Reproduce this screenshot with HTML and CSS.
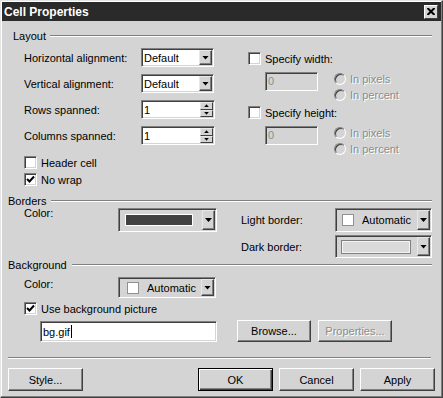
FILE: index.html
```html
<!DOCTYPE html>
<html lang="en">
<head>
  <meta charset="UTF-8">
  <meta name="viewport" content="width=device-width, initial-scale=1.0">
  <link rel="stylesheet" href="styles.css">
  <title>Cell Properties</title>
</head>
<body>
  <div class="window">
    <div class="titlebar">
      <span class="title">Cell Properties</span>
      <span class="close">
        <svg width="8" height="7" viewBox="0 0 8 7"><path d="M0.5 0 L7.5 7 M7.5 0 L0.5 7" stroke="#000" stroke-width="2"/></svg>
      </span>
    </div>

    <div class="content">
      <!-- Layout -->
      <div class="group-head layout-head"><span>Layout</span><i class="rule"></i></div>
      <div class="layout-grid">
        <div class="left-col">
          <div class="row">
            <span class="lbl">Horizontal alignment:</span>
            <div class="select field"><span class="val">Default</span><b class="drop"></b></div>
          </div>
          <div class="row">
            <span class="lbl">Vertical alignment:</span>
            <div class="select field"><span class="val">Default</span><b class="drop"></b></div>
          </div>
          <div class="row">
            <span class="lbl">Rows spanned:</span>
            <div class="spin field"><span class="val">1</span><span class="updown"><b class="up"></b><b class="down"></b></span></div>
          </div>
          <div class="row">
            <span class="lbl">Columns spanned:</span>
            <div class="spin field"><span class="val">1</span><span class="updown"><b class="up"></b><b class="down"></b></span></div>
          </div>
          <div class="check-row first"><span class="check"></span>Header cell</div>
          <div class="check-row">
            <span class="check"><svg width="9" height="9" viewBox="0 0 9 9"><path d="M1 4 L3.5 6.5 L8 1.5" stroke="#000" stroke-width="2" fill="none"/></svg></span>No wrap
          </div>
        </div>

        <div class="right-col">
          <div class="size-block">
            <div class="check-row"><span class="check"></span>Specify width:</div>
            <div class="size-opts">
              <div class="num field off">0</div>
              <div class="radios">
                <div class="radio-row"><span class="radio"></span><span class="dim">In pixels</span></div>
                <div class="radio-row"><span class="radio"></span><span class="dim">In percent</span></div>
              </div>
            </div>
          </div>
          <div class="size-block">
            <div class="check-row"><span class="check"></span>Specify height:</div>
            <div class="size-opts">
              <div class="num field off">0</div>
              <div class="radios">
                <div class="radio-row"><span class="radio"></span><span class="dim">In pixels</span></div>
                <div class="radio-row"><span class="radio"></span><span class="dim">In percent</span></div>
              </div>
            </div>
          </div>
        </div>
      </div>

      <!-- Borders -->
      <div class="group-head borders-head"><span>Borders</span><i class="rule"></i></div>
      <div class="borders-grid">
        <span class="lbl top">Color:</span>
        <div class="color-drop field">
          <span class="bar dark"></span><b class="drop"></b>
        </div>
        <span></span>
        <span class="lbl">Light border:</span>
        <div class="color-drop field">
          <span class="sq"></span><span class="auto">Automatic</span><b class="drop"></b>
        </div>
        <span></span><span></span><span></span>
        <span class="lbl">Dark border:</span>
        <div class="color-drop field">
          <span class="bar light"></span><b class="drop"></b>
        </div>
      </div>

      <!-- Background -->
      <div class="group-head bg-head"><span>Background</span><i class="rule"></i></div>
      <div class="bg-color-row">
        <span class="lbl top">Color:</span>
        <div class="color-drop field narrow">
          <span class="sq"></span><span class="auto">Automatic</span><b class="drop"></b>
        </div>
      </div>
      <div class="check-row bg-check">
        <span class="check"><svg width="9" height="9" viewBox="0 0 9 9"><path d="M1 4 L3.5 6.5 L8 1.5" stroke="#000" stroke-width="2" fill="none"/></svg></span>Use background picture
      </div>
      <div class="file-row">
        <div class="file field">bg.gif<i class="caret"></i></div>
        <button class="btn browse">Browse...</button>
        <button class="btn props" disabled>Properties...</button>
      </div>

      <div class="separator"></div>

      <div class="button-row">
        <button class="btn">Style...</button>
        <button class="btn default ok">OK</button>
        <button class="btn">Cancel</button>
        <button class="btn">Apply</button>
      </div>
    </div>
  </div>
</body>
</html>
```

FILE: styles.css
```css
body {
  margin: 0;
  font-family: 'Liberation Sans', Arial, sans-serif;
  font-size: 11px;
  color: #000;
  background-color: #d4d4d4;
}
.window {
  width: 443px;
  height: 398px;
  box-sizing: border-box;
  background-color: #d4d4d4;
  border: 1px solid;
  border-color: #e4e4e4 #404040 #404040 #e4e4e4;
  padding: 1px;
  box-shadow: inset -1px -1px #808080, inset 1px 1px #fff;
}
.titlebar {
  height: 19px;
  background-color: #2a2a2a;
  display: flex;
  align-items: center;
  justify-content: space-between;
  padding: 0 3px 0 2px;
}
.title {
  color: #fff;
  font-weight: bold;
  font-size: 12px;
}
.close {
  width: 14px;
  height: 14px;
  box-sizing: border-box;
  background-color: #d4d4d4;
  border: 1px solid;
  border-color: #fff #404040 #404040 #fff;
  display: flex;
  align-items: center;
  justify-content: center;
}
.content {
  padding: 8px 9px 0 6px;
}

/* group headers */
.group-head {
  height: 14px;
  display: flex;
  align-items: center;
  gap: 4px;
}
.rule {
  flex: 1;
  height: 0;
  border-top: 1px solid #808080;
  border-bottom: 1px solid #fff;
}
.layout-head {
  margin-left: 5px;
}
.borders-head {
  margin-top: 8px;
}
.bg-head .rule {
  margin-left: 1px;
}

/* shared fields */
.field {
  box-sizing: border-box;
  border: 1px solid;
  border-color: #808080 #fff #fff #808080;
  box-shadow: inset 1px 1px #404040, inset -1px -1px #d4d4d4;
}
.drop {
  width: 13px;
  box-sizing: border-box;
  align-self: stretch;
  margin: 1px 1px 1px auto;
  background-color: #d4d4d4;
  border: 1px solid;
  border-color: #e8e8e8 #404040 #404040 #e8e8e8;
  box-shadow: inset -1px -1px #808080;
  display: flex;
  align-items: center;
  justify-content: center;
}
.drop::after {
  content: "";
  width: 7px;
  height: 4px;
  background-color: #000;
  clip-path: polygon(0 0, 100% 0, 50% 100%);
}
.lbl.top {
  align-self: start;
}

/* layout section */
.layout-grid {
  display: flex;
  padding-left: 16px;
}
.left-col {
  width: 224px;
  padding-top: 5px;
}
.row {
  display: flex;
  align-items: center;
  height: 19px;
}
.row + .row {
  margin-top: 7px;
}
.row .lbl {
  width: 117px;
}
.select {
  width: 73px;
  height: 19px;
  display: flex;
  align-items: center;
  background-color: #fff;
}
.val {
  padding-left: 2px;
}
.spin {
  width: 74px;
  height: 19px;
  display: flex;
  align-items: center;
  background-color: #fff;
}
.updown {
  margin-left: auto;
  align-self: stretch;
  width: 13px;
  display: flex;
  flex-direction: column;
  margin-right: 1px;
  margin-top: 1px;
  margin-bottom: 1px;
}
.updown b {
  flex: 1;
  background-color: #d4d4d4;
  border: 1px solid;
  border-color: #e8e8e8 #404040 #404040 #e8e8e8;
  display: flex;
  align-items: center;
  justify-content: center;
}
.updown b::after {
  content: "";
  width: 5px;
  height: 3px;
  background-color: #000;
}
.updown .up::after {
  clip-path: polygon(50% 0, 100% 100%, 0 100%);
}
.updown .down::after {
  clip-path: polygon(0 0, 100% 0, 50% 100%);
}
.check-row {
  display: flex;
  align-items: center;
  gap: 4px;
  height: 13px;
}
.check-row.first {
  margin-top: 11px;
}
.left-col .check-row + .check-row {
  margin-top: 4px;
}
.check {
  width: 13px;
  height: 13px;
  box-sizing: border-box;
  background-color: #fff;
  border: 1px solid;
  border-color: #808080 #fff #fff #808080;
  box-shadow: inset 1px 1px #404040, inset -1px -1px #d4d4d4;
  display: flex;
  align-items: center;
  justify-content: center;
}
.right-col {
  padding-top: 9px;
}
.size-block {
  height: 54px;
}
.size-opts {
  display: flex;
  margin-top: 6px;
  padding-left: 17px;
}
.num {
  width: 53px;
  height: 19px;
  margin-top: 1px;
  padding: 2px 0 0 2px;
}
.off {
  color: #8c8c8c;
}
.radios {
  margin-left: 16px;
}
.radio-row {
  height: 16px;
  display: flex;
  align-items: center;
  gap: 4px;
}
.radio {
  width: 12px;
  height: 12px;
  box-sizing: border-box;
  border-radius: 50%;
  border: 1px solid;
  border-color: #808080 #fff #fff #808080;
  box-shadow: inset 1px 1px #404040;
}
.dim {
  color: #8c8c8c;
  text-shadow: 1px 1px 0 #fff;
}

/* borders section */
.borders-grid {
  display: grid;
  grid-template-columns: 94px 99px 24px 94px 97px;
  grid-template-rows: 24px 23px;
  row-gap: 3px;
  padding-left: 16px;
  align-items: center;
}
.borders-grid .lbl.top {
  line-height: 10px;
}
.color-drop {
  height: 100%;
  display: flex;
  align-items: center;
  padding-left: 6px;
  background-color: #d4d4d4;
}
.bar {
  width: 68px;
  height: 12px;
  box-sizing: border-box;
  border: 1px solid #fff;
  outline: 1px solid #808080;
}
.bar.dark {
  background-color: #404040;
  outline: none;
}
.bar.light {
  background-color: #dadada;
  border-color: #f4f4f4;
}
.sq {
  width: 12px;
  height: 12px;
  box-sizing: border-box;
  background-color: #fff;
  border: 1px solid #909090;
}
.auto {
  margin-left: 8px;
}

/* background section */
.bg-color-row {
  display: flex;
  height: 21px;
  margin-top: 5px;
  padding-left: 16px;
}
.bg-color-row .lbl {
  width: 94px;
  margin-top: 1px;
}
.narrow {
  width: 98px;
  padding-left: 8px;
}
.bg-check {
  margin-top: 4px;
  padding-left: 16px;
}
.file-row {
  display: flex;
  align-items: flex-start;
  height: 22px;
  margin-top: 5px;
  padding-left: 32px;
}
.file {
  width: 177px;
  height: 21px;
  margin-top: 1px;
  background-color: #fff;
  display: flex;
  align-items: center;
  padding-left: 2px;
}
.caret {
  width: 1px;
  height: 13px;
  background-color: #000;
  margin-left: 1px;
}
.btn {
  width: 74px;
  height: 22px;
  box-sizing: border-box;
  font-family: inherit;
  font-size: 11px;
  color: #000;
  background-color: #d4d4d4;
  border: 1px solid;
  border-color: #fff #404040 #404040 #fff;
  box-shadow: inset -1px -1px #808080;
  padding: 0;
}
.browse {
  margin-left: 20px;
}
.props {
  margin-left: 7px;
  color: #8c8c8c;
  text-shadow: 1px 1px 0 #fff;
}
.separator {
  margin: 15px 1px 0 0;
  border-top: 1px solid #808080;
  border-bottom: 1px solid #fff;
}
.button-row {
  display: flex;
  gap: 6px;
  margin-top: 9px;
  margin-right: -3px;
}
.button-row .btn {
  width: 75px;
  height: 23px;
}
.ok {
  margin-left: auto;
}
.btn.default {
  border: 1px solid #000;
  box-shadow: inset 1px 1px #fff, inset -1px -1px #404040, inset -2px -2px #808080;
}
```
